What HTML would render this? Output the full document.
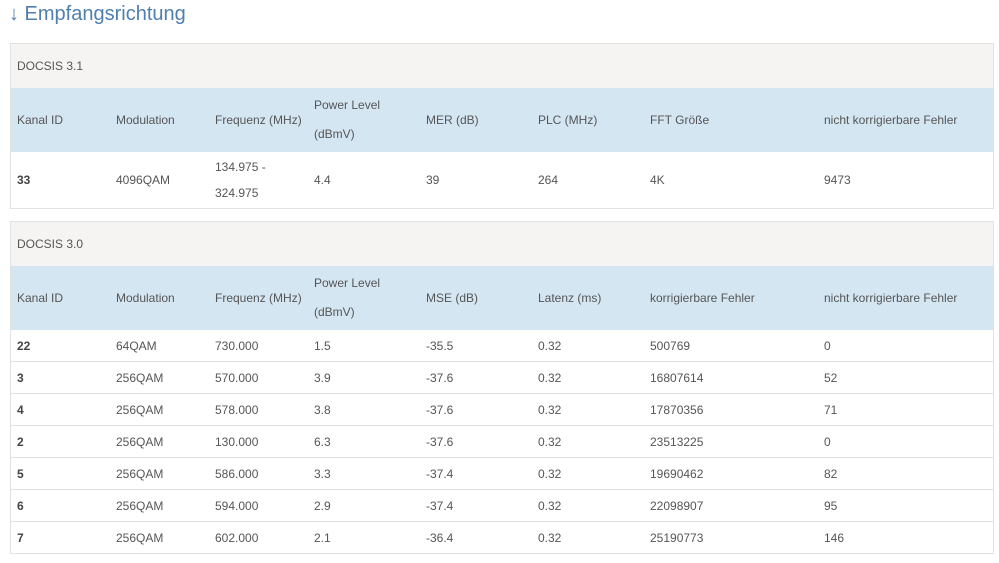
<!DOCTYPE html>
<html><head><meta charset="utf-8"><style>
body{margin:0;background:#fff;font-family:"Liberation Sans",sans-serif;font-size:12px;color:#555;width:999px;height:563px;overflow:hidden;position:relative}
h1{position:absolute;left:9px;top:0;margin:0;font-weight:normal;font-size:20px;line-height:28px;color:#4f7fae}
.box{position:absolute;left:10px;width:982px;border:1px solid #e2e2e2;border-bottom:none}
table{border-collapse:collapse;width:982px;table-layout:fixed}
td{padding:0 0 0 6px;vertical-align:middle;white-space:nowrap}
.cap td{background:#f5f4f2;height:44px}
.hd td{background:#d5e6f3;height:64px;line-height:29px}
.r1 td{height:56px;line-height:26px;border-bottom:1px solid #e2e2e2}
.r td{height:31px;border-bottom:1px solid #e2e2e2}
b{color:#444}
</style></head><body>
<h1>↓ Empfangsrichtung</h1>
<div class="box" style="top:43px">
<table>
<colgroup><col style="width:99px"><col style="width:99px"><col style="width:99px"><col style="width:112px"><col style="width:112px"><col style="width:112px"><col style="width:174px"><col></colgroup>
<tr class="cap"><td colspan="8">DOCSIS 3.1</td></tr>
<tr class="hd"><td>Kanal ID</td><td>Modulation</td><td>Frequenz (MHz)</td><td>Power Level<br>(dBmV)</td><td>MER (dB)</td><td>PLC (MHz)</td><td>FFT Größe</td><td>nicht korrigierbare Fehler</td></tr>
<tr class="r1"><td><b>33</b></td><td>4096QAM</td><td>134.975 -<br>324.975</td><td>4.4</td><td>39</td><td>264</td><td>4K</td><td>9473</td></tr>
</table></div>
<div class="box" style="top:221px">
<table>
<colgroup><col style="width:99px"><col style="width:99px"><col style="width:99px"><col style="width:112px"><col style="width:112px"><col style="width:112px"><col style="width:174px"><col></colgroup>
<tr class="cap"><td colspan="8">DOCSIS 3.0</td></tr>
<tr class="hd"><td>Kanal ID</td><td>Modulation</td><td>Frequenz (MHz)</td><td>Power Level<br>(dBmV)</td><td>MSE (dB)</td><td>Latenz (ms)</td><td>korrigierbare Fehler</td><td>nicht korrigierbare Fehler</td></tr>
<tr class="r"><td><b>22</b></td><td>64QAM</td><td>730.000</td><td>1.5</td><td>-35.5</td><td>0.32</td><td>500769</td><td>0</td></tr>
<tr class="r"><td><b>3</b></td><td>256QAM</td><td>570.000</td><td>3.9</td><td>-37.6</td><td>0.32</td><td>16807614</td><td>52</td></tr>
<tr class="r"><td><b>4</b></td><td>256QAM</td><td>578.000</td><td>3.8</td><td>-37.6</td><td>0.32</td><td>17870356</td><td>71</td></tr>
<tr class="r"><td><b>2</b></td><td>256QAM</td><td>130.000</td><td>6.3</td><td>-37.6</td><td>0.32</td><td>23513225</td><td>0</td></tr>
<tr class="r"><td><b>5</b></td><td>256QAM</td><td>586.000</td><td>3.3</td><td>-37.4</td><td>0.32</td><td>19690462</td><td>82</td></tr>
<tr class="r"><td><b>6</b></td><td>256QAM</td><td>594.000</td><td>2.9</td><td>-37.4</td><td>0.32</td><td>22098907</td><td>95</td></tr>
<tr class="r"><td><b>7</b></td><td>256QAM</td><td>602.000</td><td>2.1</td><td>-36.4</td><td>0.32</td><td>25190773</td><td>146</td></tr>
</table></div>
</body></html>
